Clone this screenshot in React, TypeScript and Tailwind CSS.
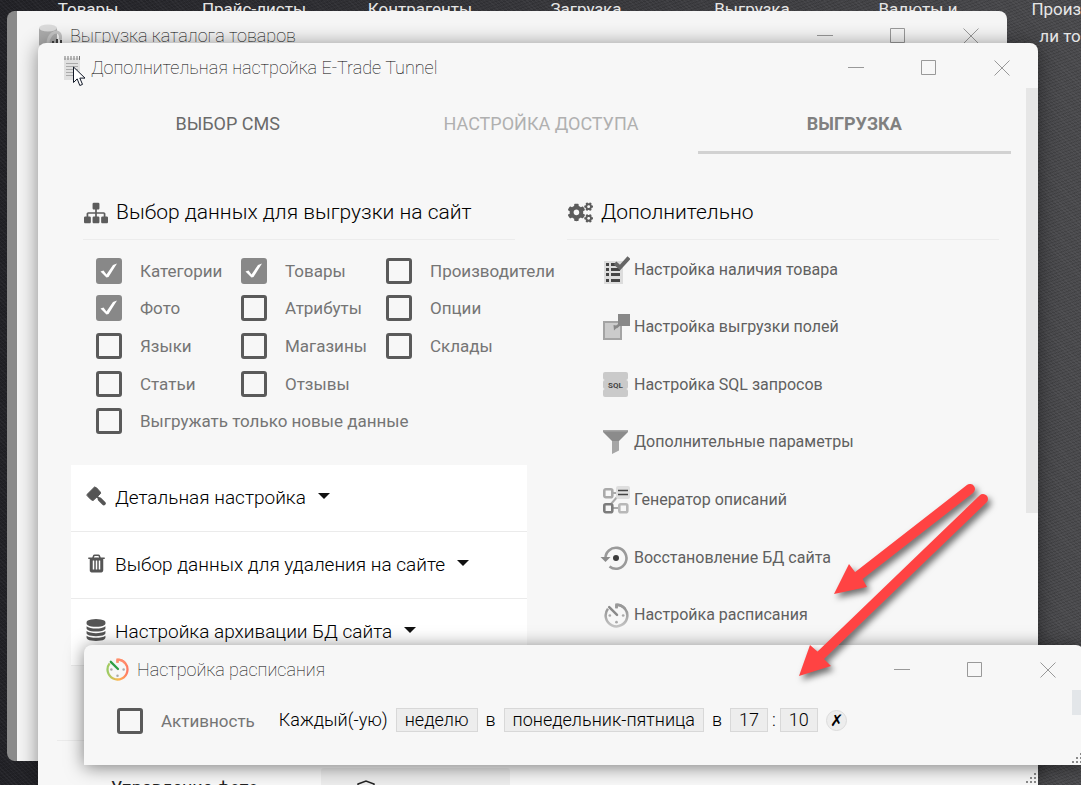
import { useState } from 'react';
import type { ReactNode } from 'react';
import { FaCogs } from 'react-icons/fa';

const DESKTOP_LABELS = ['Товары', 'Прайс-листы', 'Контрагенты', 'Загрузка', 'Выгрузка', 'Валюты и', 'Производите ли товаров'];

const TABS = [
  { label: 'ВЫБОР CMS', className: 'text-[#6a6a6a] border-transparent' },
  { label: 'НАСТРОЙКА ДОСТУПА', className: 'text-[#b0b0b0] border-transparent' },
  { label: 'ВЫГРУЗКА', className: 'font-bold text-[#808080] border-[#d2d2d2]' },
];

const EXPORT_ROWS = [
  ['Категории', 'Товары', 'Производители'],
  ['Фото', 'Атрибуты', 'Опции'],
  ['Языки', 'Магазины', 'Склады'],
  ['Статьи', 'Отзывы'],
  ['Выгружать только новые данные'],
];

const CHECKED = ['Категории', 'Товары', 'Фото'];

function ClockIcon({ size, color }: { size: number; color?: boolean }) {
  const id = color ? 'ring-color' : 'ring-gray';
  return (
    <svg width={size} height={size} viewBox="0 0 24 24" fill="none">
      <defs>
        <linearGradient id={id} x1="0" y1="0" x2={color ? '1' : '0'} y2={color ? '0' : '1'}>
          <stop offset="0" stopColor={color ? '#9ccc65' : '#8c8c8c'} />
          <stop offset="0.55" stopColor={color ? '#ffb74d' : '#a8a8a8'} />
          <stop offset="1" stopColor={color ? '#ff7a65' : '#c4c4c4'} />
        </linearGradient>
      </defs>
      <path d="M12 1.5v3.5M12 1.6a10.4 10.4 0 1 1-8.2 4" stroke={`url(#${id})`} strokeWidth="2.4" />
      <path d="M12 5V1.6a10.4 10.4 0 0 1 8 3.8" stroke={color ? '#ff8a70' : '#999'} strokeWidth="2.4" />
      <path d="M5 4l7.5 7.5" stroke={color ? '#2f9e44' : '#8a8a8a'} strokeWidth="2.4" strokeLinecap="round" />
      <g fill="#aaa">
        <circle cx="5.6" cy="12" r="1.3" />
        <circle cx="18.4" cy="12" r="1.3" />
        <circle cx="12" cy="18.4" r="1.3" />
      </g>
    </svg>
  );
}

const EXTRA_LINKS: { label: string; icon: ReactNode }[] = [
  {
    label: 'Настройка наличия товара',
    icon: (
      <svg width="28" height="28" viewBox="0 0 28 28">
        <path d="M2 5h19v23H2z" fill="#dcdcdc" />
        <path d="M4 7h3v3H4zM4 12h3v3H4zM4 17h3v3H4zM4 23h3v3H4zM9 7h5v3H9zM9 12h9v3H9zM9 17h9v3H9zM9 23h9v3H9z" fill="#444" />
        <path d="M13 7l5 4.5 9-10" stroke="#666" strokeWidth="4" fill="none" />
      </svg>
    ),
  },
  {
    label: 'Настройка выгрузки полей',
    icon: (
      <svg width="28" height="28" viewBox="0 0 28 28">
        <path d="M2 9h17v17H2z" fill="#cbcbcb" stroke="#a4a4a4" strokeWidth="2" />
        <path d="M16 1h12v12H16z" fill="#888" />
        <path d="M18 11l-4 3.500" stroke="#888" strokeWidth="2.500" />
        <path d="M11.500 12l5 1-4.500 4.500z" fill="#888" />
      </svg>
    ),
  },
  {
    label: 'Настройка SQL запросов',
    icon: (
      <svg width="28" height="28" viewBox="0 0 28 28">
        <g fill="#cacaca">
          <rect x="1" y="1" width="25" height="8" rx="2" />
          <rect x="1" y="18" width="25" height="8" rx="2" />
          <rect x="1" y="9" width="25" height="9" rx="2" />
          <path d="M3 7h21v13H3z" />
        </g>
        <text x="13.5" y="17" textAnchor="middle" fontSize="8" fontWeight="700" fontFamily="Roboto, sans-serif" fill="#444">
          SQL
        </text>
      </svg>
    ),
  },
  {
    label: 'Дополнительные параметры',
    icon: (
      <svg width="28" height="28" viewBox="0 0 28 28">
        <path d="M10 12h7v10.500l-7 3.500z" fill="#a6a6a6" />
        <path d="M1 2h25v2l-9 9h-7L1 4z" fill="#8b8b8b" />
        <path d="M1 2h25v1.500H1z" fill="#a6a6a6" />
      </svg>
    ),
  },
  {
    label: 'Генератор описаний',
    icon: (
      <svg width="28" height="28" viewBox="0 0 28 28" fill="none" strokeWidth="2.6">
        <path d="M11 7h5M9 18l7-8M11 22h6" stroke="#aaa" strokeWidth="2" />
        <rect x="2.300" y="3.300" width="8" height="8" rx="1.500" stroke="#aaa" />
        <rect x="2.300" y="18.300" width="8" height="8" rx="1.500" stroke="#7c7c7c" />
        <rect x="17.300" y="18.300" width="8" height="8" rx="1.500" stroke="#b8b8b8" />
        <rect x="14" y="0" width="14" height="13" rx="2" fill="#dedede" />
        <path d="M16 4.500h10M16 8.500h10" stroke="#444" strokeWidth="1.300" />
      </svg>
    ),
  },
  {
    label: 'Восстановление БД сайта',
    icon: (
      <svg className="overflow-visible" width="28" height="28" viewBox="0 0 28 28" fill="none">
        <path d="M3.500 15a10.500 10.500 0 1 1 4 7.500" stroke="#9a9a9a" strokeWidth="2.600" />
        <path d="M-1.500 13h10L3.500 18z" fill="#8c8c8c" />
        <circle cx="14" cy="14" r="3" fill="#3c3c3c" />
      </svg>
    ),
  },
  { label: 'Настройка расписания', icon: <ClockIcon size={25} /> },
];

const ACCORDION: { label: string; icon: ReactNode }[] = [
  {
    label: 'Детальная настройка',
    icon: (
      <svg width="20" height="20" viewBox="0 0 20 20" fill="#555" stroke="#555" strokeLinejoin="round" strokeLinecap="round">
        <path d="M1 8.500L8.500 1l2 .8 3.800 4.200.3 1.500-7.500 7-2-.8L1.500 10z" />
        <path d="M10 9.500l3.500 3.500" strokeWidth="2" />
        <path d="M13.800 13.300l4 4" strokeWidth="4" />
      </svg>
    ),
  },
  {
    label: 'Выбор данных для удаления на сайте',
    icon: (
      <svg width="21" height="21" viewBox="0 0 1792 1792" fill="#555">
        <path d="M704 1376v-704q0-14-9-23t-23-9h-64q-14 0-23 9t-9 23v704q0 14 9 23t23 9h64q14 0 23-9t9-23zm256 0v-704q0-14-9-23t-23-9h-64q-14 0-23 9t-9 23v704q0 14 9 23t23 9h64q14 0 23-9t9-23zm256 0v-704q0-14-9-23t-23-9h-64q-14 0-23 9t-9 23v704q0 14 9 23t23 9h64q14 0 23-9t9-23zm-544-992h448l-48-117q-7-9-17-11h-317q-10 2-17 11zm928 32v64q0 14-9 23t-23 9h-96v948q0 83-47 143.500t-113 60.500h-832q-66 0-113-58.500t-47-141.500v-952h-96q-14 0-23-9t-9-23v-64q0-14 9-23t23-9h309l70-167q15-37 54-63t79-26h320q40 0 79 26t54 63l70 167h309q14 0 23 9t9 23z" />
      </svg>
    ),
  },
  {
    label: 'Настройка архивации БД сайта',
    icon: (
      <svg width="22" height="22" viewBox="0 0 1792 1792" fill="#555">
        <path d="M896 768q237 0 443-43t325-127v170q0 69-103 128t-280 93.500-385 34.500-385-34.500-280-93.500-103-128v-170q119 84 325 127t443 43zm0 768q237 0 443-43t325-127v170q0 69-103 128t-280 93.500-385 34.500-385-34.500-280-93.500-103-128v-170q119 84 325 127t443 43zm0-384q237 0 443-43t325-127v170q0 69-103 128t-280 93.500-385 34.500-385-34.500-280-93.500-103-128v-170q119 84 325 127t443 43zm0-1152q208 0 385 34.500t280 93.500 103 128v128q0 69-103 128t-280 93.500-385 34.500-385-34.500-280-93.500-103-128v-128q0-69 103-128t280-93.500 385-34.500z" />
      </svg>
    ),
  },
];

function SitemapIcon() {
  return (
    <svg width="24" height="24" viewBox="0 0 1792 1792" fill="#5c5c5c">
      <path d="M1792 1248v320q0 40-28 68t-68 28h-320q-40 0-68-28t-28-68v-320q0-40 28-68t68-28h96v-192h-512v192h96q40 0 68 28t28 68v320q0 40-28 68t-68 28h-320q-40 0-68-28t-28-68v-320q0-40 28-68t68-28h96v-192h-512v192h96q40 0 68 28t28 68v320q0 40-28 68t-68 28h-320q-40 0-68-28t-28-68v-320q0-40 28-68t68-28h96v-192q0-52 38-90t90-38h512v-192h-96q-40 0-68-28t-28-68v-320q0-40 28-68t68-28h320q40 0 68 28t28 68v320q0 40-28 68t-68 28h-96v192h512q52 0 90 38t38 90v192h96q40 0 68 28t28 68z" />
    </svg>
  );
}

function TitleBar({ title, icon }: { title: string; icon: ReactNode }) {
  return (
    <header className="flex h-[45px] items-center pt-1">
      <div className="flex flex-1 items-center gap-2 pl-[22px]">
        <span className="flex w-[23px] justify-center">{icon}</span>
        <h1 className="text-[18px] leading-6 font-thin whitespace-nowrap text-black">{title}</h1>
      </div>
      <div className="flex text-[#999]">
        <button aria-label="Свернуть" className="flex h-10 w-[73px] items-center justify-center">
          <svg width="16" height="16" stroke="currentColor">
            <path d="M0 7.500h16" />
          </svg>
        </button>
        <button aria-label="Развернуть" className="flex h-10 w-[73px] items-center justify-center">
          <svg width="16" height="16" fill="none" stroke="currentColor">
            <path d="M.5.5h14v14H.5z" />
          </svg>
        </button>
        <button aria-label="Закрыть" className="flex h-10 w-[73px] items-center justify-center">
          <svg width="16" height="16" stroke="currentColor">
            <path d="M.5.5l15 15M15.500.5l-15 15" />
          </svg>
        </button>
      </div>
    </header>
  );
}

function SectionHeading({ icon, children }: { icon: ReactNode; children: ReactNode }) {
  return (
    <h2 className="mx-3 flex items-center gap-2 border-b border-[#ececec] pt-1 pb-[13px] pl-px text-[21px] leading-[27px] font-light whitespace-nowrap text-black">
      {icon}
      {children}
    </h2>
  );
}

function Checkbox({ label, initial = false }: { label: string; initial?: boolean }) {
  const [checked, setChecked] = useState(initial);

  return (
    <label className="flex items-center gap-[18px] text-[17px] leading-6 whitespace-nowrap text-[#757575]">
      <span className="relative flex">
        <input
          type="checkbox"
          checked={checked}
          onChange={(e) => setChecked(e.target.checked)}
          className="size-[26px] appearance-none rounded-[3px] border-3 border-[#5a5a5a] checked:border-[#888] checked:bg-[#888]"
        />
        {checked && (
          <svg className="pointer-events-none absolute inset-0" width="26" height="26" viewBox="0 0 26 26">
            <path d="M4.500 13.500l3-1 3 4L17 7l4-1.500-8.500 13.500-2 .5z" fill="#fff" />
          </svg>
        )}
      </span>
      {label}
    </label>
  );
}

function Grip() {
  return (
    <svg className="absolute right-0 bottom-0" width="12" height="12" fill="#8a8a8a">
      <path d="M8 0h2v2H8zM4 4h2v2H4zM8 4h2v2H8zM0 8h2v2H0zM4 8h2v2H4zM8 8h2v2H8z" />
    </svg>
  );
}

function Chip({ children }: { children: ReactNode }) {
  return (
    <button className="h-6 border border-[#d8d8d8] bg-[#ededed] px-2 leading-[22px] whitespace-nowrap">{children}</button>
  );
}

export default function App() {
  return (
    <div className="relative h-screen overflow-hidden bg-[repeating-linear-gradient(45deg,#ffffff08_0px_1px,#0000_1px_3px),repeating-linear-gradient(-20deg,#00000020_0px_1px,#0000_1px_3px),linear-gradient(to_right,#222227,#38383c_50%,#4b4b4e)] font-[Roboto,sans-serif]">
      {/* Desktop captions */}
      <div className="-mt-1 flex pl-[5px]">
        {DESKTOP_LABELS.map((label) => (
          <div key={label} className="w-[166px] shrink-0 px-5 text-center text-[17px] leading-[27px] text-[#e6e6e6]">
            {label}
          </div>
        ))}
      </div>

      {/* Catalog window */}
      <section className="absolute top-[11px] right-[74px] bottom-6 left-[7px] overflow-hidden rounded-lg border-l-[10px] border-[#8a8a8a] bg-[#f5f5f5]">
        <TitleBar
          title="Выгрузка каталога товаров"
          icon={
            <svg width="23" height="24" viewBox="0 0 23 24">
              <path d="M0 4v17c0 2 18 2 18 0V4z" fill="#ababab" />
              <ellipse cx="9" cy="4" rx="9" ry="3.500" fill="#dadada" />
              <path d="M9 20c0-8 5-12 9-12 4 1 4 6 3 8" fill="none" stroke="#c4c4c4" strokeWidth="3" />
              <path d="M13 17h2v5h-2zM17 15h2v7h-2zM21 16h2v6h-2z" fill="#444" />
            </svg>
          }
        />
      </section>

      {/* Tunnel settings window */}
      <section className="absolute top-[43px] right-[43px] bottom-0 left-[38px] rounded-t-lg bg-[#f7f7f7] shadow-[0_2px_20px_rgba(0,0,0,0.45)]">
        <TitleBar
          title="Дополнительная настройка E-Trade Tunnel"
          icon={
            <svg width="18" height="24" viewBox="0 0 18 24">
              <path d="M1 2h16v22H1z" fill="#e0e0e0" />
              <path d="M2 0v4M5 0v4M8 0v4M11 0v4M14 0v4M16.500 0v4" stroke="#777" />
              <path d="M3 7.500h12M3 10.500h12M3 13.500h12M3 16.500h9M3 19.500h8" stroke="#aaa" />
            </svg>
          }
        />
        <div className="flex h-[calc(100%-45px)] overflow-hidden">
          <div className="min-w-0 flex-1 pr-[15px] pl-[33px]">
            <nav className="grid grid-cols-3">
              {TABS.map((tab) => (
                <button key={tab.label} className={`border-b-3 pt-[25px] pb-[17px] text-[18px] leading-[21px] ${tab.className}`}>
                  {tab.label}
                </button>
              ))}
            </nav>

            <div className="grid grid-cols-2 gap-7 pt-[41px]">
              <div>
                <SectionHeading icon={<SitemapIcon />}>Выбор данных для выгрузки на сайт</SectionHeading>
                <div className="mt-3 grid min-h-[188px] auto-rows-fr pl-[25px]">
                  {EXPORT_ROWS.map((row) => (
                    <div key={row[0]} className="flex items-center">
                      {row.map((label) => (
                        <div key={label} className="w-[145px]">
                          <Checkbox label={label} initial={CHECKED.includes(label)} />
                        </div>
                      ))}
                    </div>
                  ))}
                </div>

                <div className="mt-[25px] bg-white">
                  {ACCORDION.map((item) => (
                    <button
                      key={item.label}
                      className="flex h-[67px] w-full items-center border-b border-[#ebebeb] pl-[14px] text-[19px] leading-6 font-light whitespace-nowrap text-black"
                    >
                      <span className="mr-2 mb-1 flex w-[22px] justify-center">{item.icon}</span>
                      {item.label}
                      <svg className="mb-1 ml-3" width="12" height="6" fill="#111">
                        <path d="M0 0h12L6 6z" />
                      </svg>
                    </button>
                  ))}
                </div>
              </div>

              <div>
                <SectionHeading icon={<FaCogs size={25} color="#5c5c5c" />}>Дополнительно</SectionHeading>
                <ul className="mt-px grid min-h-[403px] auto-rows-fr pl-[47px]">
                  {EXTRA_LINKS.map((link) => (
                    <li key={link.label} className="flex items-center">
                      <a href="#" className="flex items-center gap-1 text-[16px] leading-6 whitespace-nowrap text-[#606060]">
                        <span className="flex w-7 justify-center">{link.icon}</span>
                        {link.label}
                      </a>
                    </li>
                  ))}
                </ul>
              </div>
            </div>

            <div className="-mx-[14px] mt-[74px] flex border-t border-[#ebebeb] pt-[27px] pl-[14px] text-[18px] leading-[40px] text-[#222]">
              <button className="w-[250px] pl-10 text-left">Управление фото</button>
              <button className="flex w-[189px] justify-center rounded-t-[3px] bg-[#ececec] pt-3 pr-25">
                <svg width="18" height="18" viewBox="0 0 18 18" fill="none" stroke="#222" strokeWidth="1.500">
                  <path d="M1 4l8-3 8 3v5c0 4-4 7-8 8-4-1-8-4-8-8z" />
                </svg>
              </button>
            </div>
          </div>
          <div className="h-[425px] w-3 shrink-0 bg-[#e6e6e6]" />
        </div>
        <Grip />
      </section>

      {/* Schedule window */}
      <section className="absolute top-[645px] -right-[3px] left-[84px] rounded-t-lg bg-[#f7f7f7] shadow-[0_2px_18px_rgba(0,0,0,0.5)]">
        <TitleBar title="Настройка расписания" icon={<ClockIcon size={23} color />} />
        <div className="flex justify-between">
          <div className="flex h-[75px] items-start pt-[18px] pl-[33px]">
            <Checkbox label="Активность" />
            <div className="ml-6 flex items-center gap-2 text-[18px] leading-6 font-light text-black">
              <span>Каждый(-ую)</span>
              <Chip>неделю</Chip>
              <span>в</span>
              <Chip>понедельник-пятница</Chip>
              <span>в</span>
              <div className="flex items-center gap-1">
                <Chip>17</Chip>
                <span>:</span>
                <Chip>10</Chip>
              </div>
              <button aria-label="Удалить" className="size-[21px] rounded-full border border-[#dcdcdc] bg-[#ededed] text-[16px] leading-[19px]">
                ✗
              </button>
            </div>
          </div>
          <div className="h-[25px] w-3 bg-[#e3e6e9]" />
        </div>
        <Grip />
      </section>

      {/* Pointer */}
      <svg className="pointer-events-none absolute top-[66px] left-[73px]" width="13" height="21" viewBox="0 0 13 21">
        <path d="M.5 1v15.500l3.700-3.600 2.600 6.600 2.700-1.100-2.700-6.300H12z" fill="#fff" stroke="#111827" />
      </svg>

      {/* Callout arrows */}
      <svg
        className="pointer-events-none absolute top-[480px] left-[790px] drop-shadow-[3px_4px_3px_rgba(0,0,0,0.55)]"
        width="210"
        height="205"
        viewBox="790 480 210 205"
        fill="#ff4343"
        stroke="#ff4343"
      >
        <path d="M970 489L857 577" strokeWidth="10" strokeLinecap="round" />
        <path d="M834 594l15-30 6 8 7 6 5 9z" stroke="none" />
        <path d="M983 499L820 656" strokeWidth="10" strokeLinecap="round" />
        <path d="M799 676l11-31 8 7 6 7 7 7z" stroke="none" />
      </svg>
    </div>
  );
}
